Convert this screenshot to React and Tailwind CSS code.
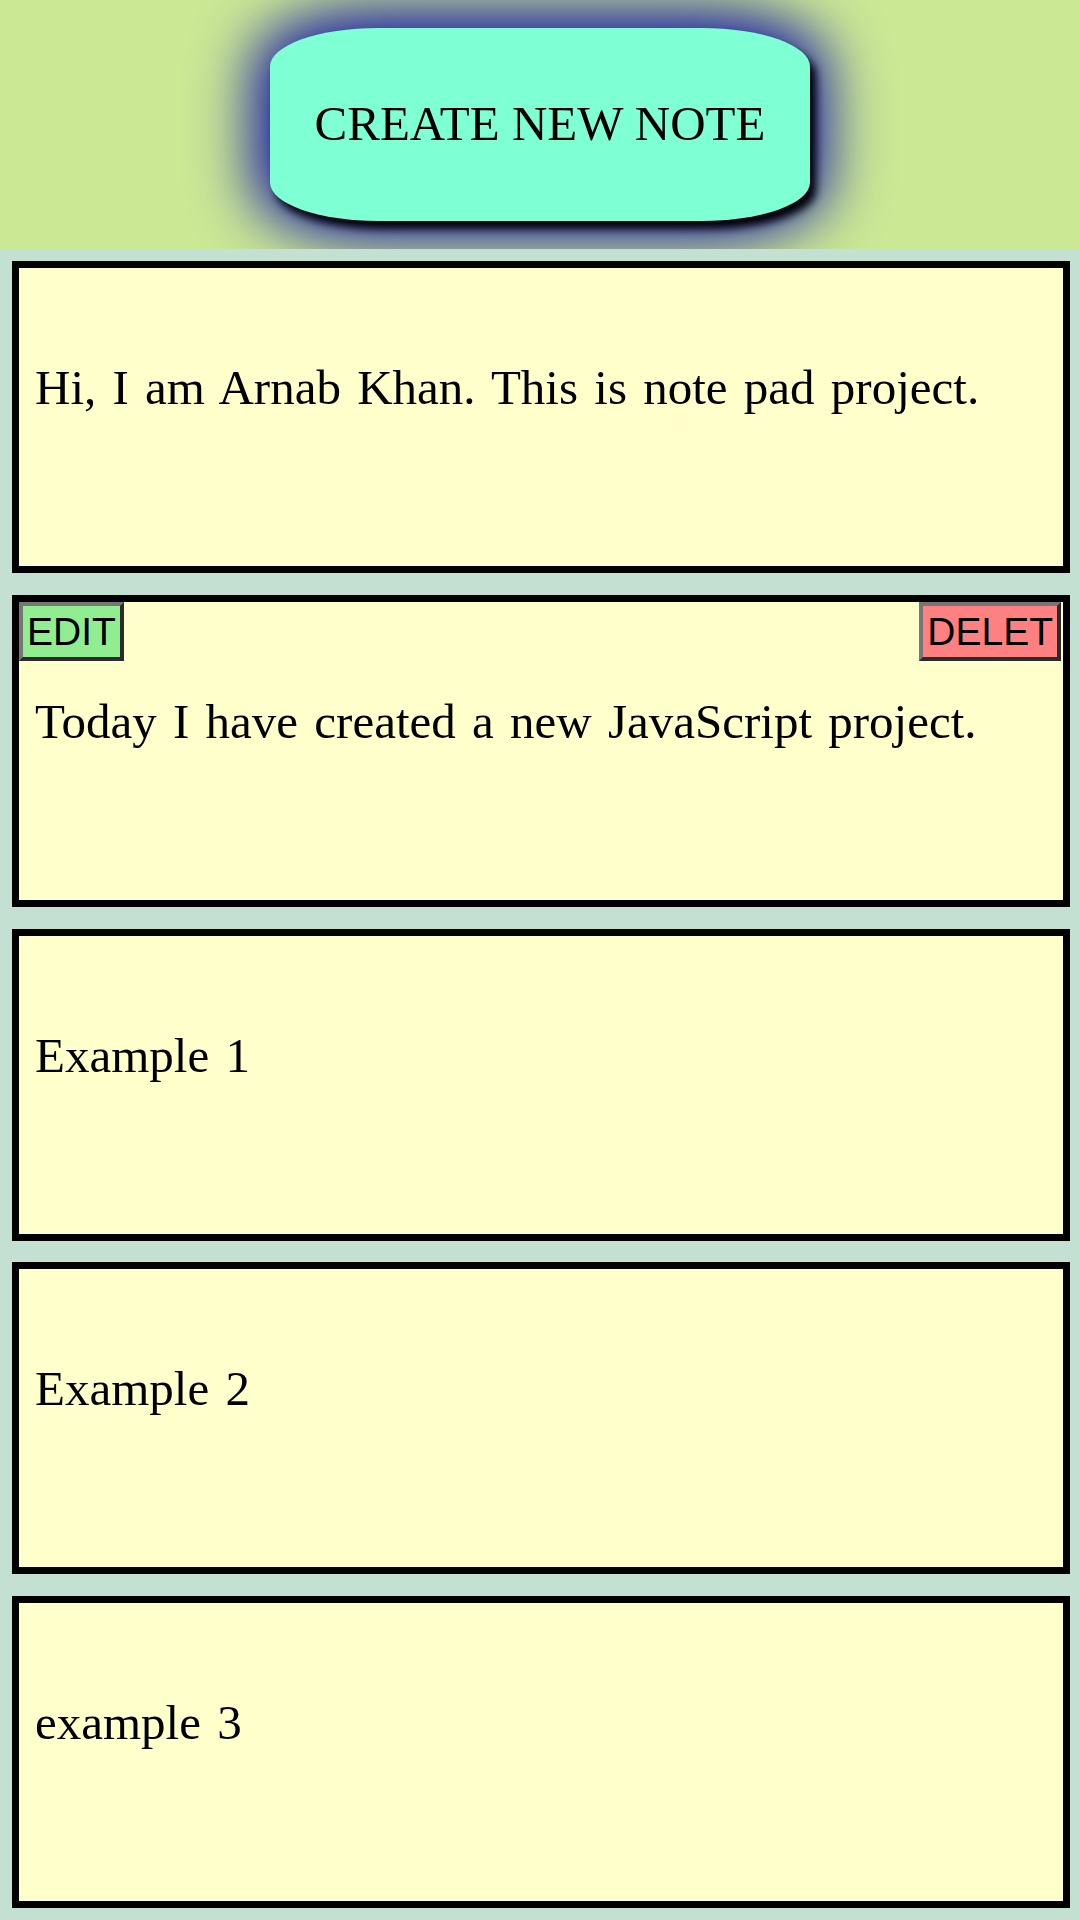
import React from "react";

const notes = [
  { text: "Hi, I am Arnab Khan. This is note pad project.", buttons: false },
  { text: "Today I have created a new JavaScript project.", buttons: true },
  { text: "Example 1", buttons: false },
  { text: "Example 2", buttons: false },
  { text: "example 3", buttons: false },
];

function Note({ text, buttons }) {
  return (
    <div className="relative h-[312px] border-[7px] border-black bg-[#ffffcc]">
      {buttons && (
        <>
          <button className="absolute left-0 top-0 flex h-[59px] items-center border-4 border-t-[#767676] border-l-[#767676] border-r-[#2b2b2b] border-b-[#2b2b2b] bg-[#90ee90] px-[4px] text-[39px] leading-none text-black [font-family:'Liberation_Sans',Arial,sans-serif]">
            EDIT
          </button>
          <button className="absolute right-[2px] top-0 flex h-[59px] items-center border-4 border-t-[#767676] border-l-[#767676] border-r-[#2b2b2b] border-b-[#2b2b2b] bg-[#ff8080] px-[4px] text-[39px] leading-none text-black [font-family:'Liberation_Sans',Arial,sans-serif]">
            DELET
          </button>
        </>
      )}
      <p className="px-[16px] pt-[92px] text-[49px] leading-[1.15] text-black [word-spacing:4px] [font-family:'Liberation_Serif','Times_New_Roman',serif]">
        {text}
      </p>
    </div>
  );
}

export default function App() {
  return (
    <div className="min-h-[1920px] w-[1080px] bg-[#c4e0d3] [font-family:'Liberation_Serif','Times_New_Roman',serif]">
      <header className="flex h-[249px] items-center justify-center overflow-hidden bg-[#cbe895]">
        <button className="flex h-[193px] w-[540px] items-center justify-center rounded-[20%] bg-[#7fffd4] text-[49px] leading-[1.15] text-black shadow-[6px_8px_8px_#000008,0_0_60px_16px_#1010a8] [font-family:'Liberation_Serif','Times_New_Roman',serif]">
          CREATE NEW NOTE
        </button>
      </header>
      <main className="flex flex-col gap-[21.75px] pb-[12px] pl-[12px] pr-[10px] pt-[12px]">
        {notes.map((n, i) => (
          <Note key={i} {...n} />
        ))}
      </main>
    </div>
  );
}
